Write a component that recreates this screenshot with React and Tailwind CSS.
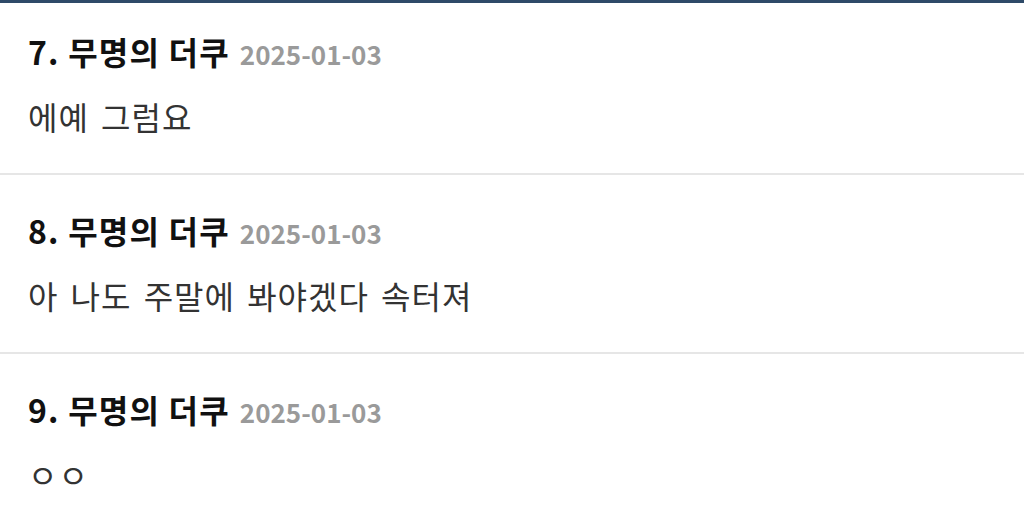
const comments = [
  { no: 7, name: '무명의 더쿠', date: '2025-01-03', body: '에예 그럼요' },
  { no: 8, name: '무명의 더쿠', date: '2025-01-03', body: '아 나도 주말에 봐야겠다 속터져' },
  { no: 9, name: '무명의 더쿠', date: '2025-01-03', body: 'ㅇㅇ' },
];

export default function App() {
  return (
    <div
      className="w-[1024px] h-[518px] overflow-hidden bg-white"
      style={{ fontFamily: '"Noto Sans CJK KR", "Noto Sans", sans-serif' }}
    >
      <div className="h-[3px] bg-[#2e4a68]" />
      {comments.map((c, i) => (
        <div
          key={c.no}
          className={
            'px-7 pb-[37px] ' +
            (i === 0 ? 'pt-[28px]' : 'pt-[35px]') +
            (i < comments.length - 1 ? ' border-b-2 border-[#e6e6e6]' : '')
          }
        >
          <div className="flex items-baseline gap-[10px] h-10 leading-10">
            <span className="text-[32px] font-bold text-[#111] tracking-[1.2px]">
              {c.no}. {c.name}
            </span>
            <span className="text-[26px] font-bold text-[#9a9a9a]">{c.date}</span>
          </div>
          <p className="mt-[25px] h-10 leading-10 text-[32px] text-[#333] tracking-[1px] [word-spacing:4px]">
            {c.body}
          </p>
        </div>
      ))}
    </div>
  );
}
